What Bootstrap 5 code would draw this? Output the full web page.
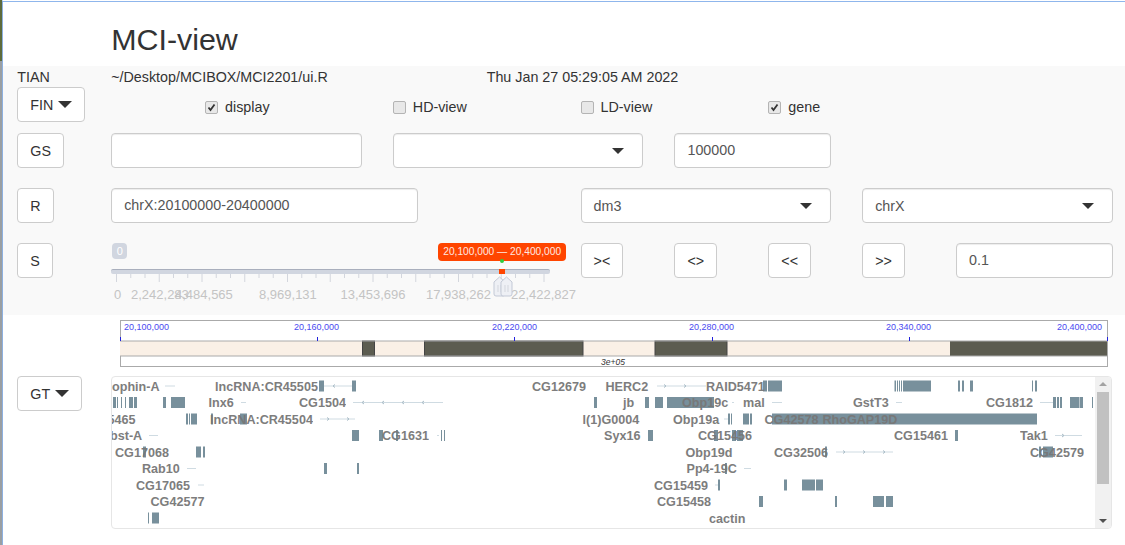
<!DOCTYPE html>
<html lang="en">
<head>
    <meta charset="UTF-8">
    <title>MCI-view</title>
    <meta name="viewport" content="width=device-width, initial-scale=1">
    <link href="https://cdn.jsdelivr.net/npm/bootstrap@5.3.2/dist/css/bootstrap.min.css" rel="stylesheet">
    <style>
        html, body { height: 545px; overflow: hidden; }
        body { background: linear-gradient(#5d6b3c 0, #5d6b3c 61px, #9a9fa3 61px); color: #333; font: 14.3px/20px "Liberation Sans", Arial, sans-serif; padding-left: 2px; }
        .app-frame { height: 545px; background: #fff; border-left: 1px solid #8db0e0; border-top: 1px solid #fff; position: relative; }
        .app-frame::before { content: ""; display: block; height: 1px; background: #8fb6ec; }
        .mci-row { --bs-gutter-x: 30px; width: 1126.5px; margin-left: -.7px; margin-right: 0; flex-wrap: wrap; }
        .title-row { height: 64px; }
        .app-title { font-size: 30.4px; line-height: 33px; font-weight: 400; margin: 21px 0 0; }
        .well-box { background: #f9f9f9; height: 249px; padding-top: 1px; width: 1125px; }
        .path-row { height: 20px; }
        .gap-s { margin-bottom: 11px; height: 35px; }
        .gap-l { margin-bottom: 20px; height: 35px; }
        .btn-mci { --bs-btn-font-size: 14.3px; --bs-btn-padding-x: 12px; --bs-btn-padding-y: 6px; --bs-btn-line-height: 20px; --bs-btn-color: #333; --bs-btn-bg: #fff; --bs-btn-border-color: #ccc; --bs-btn-border-radius: 4px; height: 35px; }
        .btn-mci::after { border-top-width: 7px; border-left-width: 7px; border-right-width: 7px; border-bottom: 0; margin-left: 5px; vertical-align: 2px; }
        .opt-check { height: 35px; gap: 7px; padding-top: 5px; }
        .opt-check input { appearance: none; width: 13px; height: 13px; margin: 0; background: #e8e8e8 center/11px no-repeat; border: 1px solid #b4b4b4; border-radius: 2px; }
        .opt-check input:checked { background-image: url("data:image/svg+xml,%3Csvg xmlns='http://www.w3.org/2000/svg' viewBox='0 0 11 11'%3E%3Cpath d='M2.500 5.500L4.500 8L8.500 2.500' fill='none' stroke='%23333' stroke-width='1.800'/%3E%3C/svg%3E"); }
        .field-mci { height: 35px; font-size: 14.3px; line-height: 20px; color: #555; border: 1px solid #ccc; border-radius: 4px; padding: 6px 12px; margin-right: 1px; box-shadow: inset 0 1px 1px rgba(0,0,0,.075); }
        .field-short { width: 307px; }
        .select-caret { width: 0; height: 0; border-left: 6px solid transparent; border-right: 6px solid transparent; border-top: 6px solid #333; margin-right: 6px; }
        .slider-box { position: relative; height: 35px; }
        .slide-min { position: absolute; left: 1px; top: 0; width: 15px; height: 16px; background: #d1d6e0; color: #fff; border-radius: 4px; font-size: 11px; line-height: 16px; text-align: center; }
        .slide-range { position: absolute; left: 327px; top: 0; width: 128px; height: 18px; background: #ff4500; color: #ffe9e0; border-radius: 4px; font-size: 10.2px; line-height: 18px; text-align: center; white-space: nowrap; }
        .slide-dot { position: absolute; left: 389px; top: 16px; width: 4px; height: 4px; background: #2ecc40; border-radius: 50%; }
        .slide-line { position: absolute; left: 0; top: 26px; width: 439px; height: 5px; background: #d1d6e0; border-top: 1px solid #a9afbd; border-radius: 2px; }
        .slide-bar { position: absolute; left: 388px; top: 26px; width: 6px; height: 5px; background: #ff4500; }
        .slide-svg { position: absolute; left: 0; top: 30px; overflow: visible; }
        .slide-tick { stroke: #d3d6dd; stroke-width: 1; }
        .slide-lab { font: 13px "Liberation Sans", Arial, sans-serif; fill: #c4c4c4; }
        .handle-shape { fill: #eef0f5; stroke: #c3c9d6; stroke-width: 1; }
        .ideo-row { height: 61px; }
        .ideo-svg { display: block; margin: 4px 0 0 8px; }
        .ideo-lab { font: 9px "Liberation Sans", Arial, sans-serif; fill: #4a4af0; }
        .ideo-note { font: italic 8.5px "Liberation Sans", Arial, sans-serif; fill: #333; }
        .track-box { position: relative; height: 153px; width: 1001px; border: 1px solid #e6e6e6; border-radius: 4px; overflow: hidden; background: #fff; }
        .track-svg { display: block; }
        .gene-name { font: bold 12.6px "Liberation Sans", Arial, sans-serif; fill: #777; opacity: .95; }
        .gene-exon { fill: #78909c; }
        .gene-line { stroke: #cfdbe2; stroke-width: 1; }
        .gene-arrow { fill: none; stroke: #a9bcc7; stroke-width: 1; }
        .scroll-rail { position: absolute; right: 0; top: 0; width: 16px; height: 100%; background: #f1f1f1; }
        .scroll-thumb { position: absolute; left: 2px; right: 2px; top: 15px; height: 92px; background: #c1c1c1; }
        .scroll-up, .scroll-down { position: absolute; left: 4px; width: 0; height: 0; border-left: 4px solid transparent; border-right: 4px solid transparent; }
        .scroll-up { top: 5px; border-bottom: 4px solid #a3a3a3; }
        .scroll-down { bottom: 5px; border-top: 4px solid #505050; }
    </style>
</head>
<body>
<div class="app-frame">
    <div class="row mci-row title-row">
        <div class="col-1"></div>
        <div class="col-11"><h2 class="app-title">MCI-view</h2></div>
    </div>
    <div class="well-box">
        <div class="row mci-row path-row">
            <div class="col-1">TIAN</div>
            <div class="col-4">~/Desktop/MCIBOX/MCI2201/ui.R</div>
            <div class="col-7">Thu Jan 27 05:29:05 AM 2022</div>
        </div>
        <div class="row mci-row gap-s">
            <div class="col-2"><button class="btn btn-mci dropdown-toggle" type="button">FIN</button></div>
            <div class="col-2"><label class="opt-check d-flex align-items-center"><input type="checkbox" checked>display</label></div>
            <div class="col-2"><label class="opt-check d-flex align-items-center"><input type="checkbox">HD-view</label></div>
            <div class="col-2"><label class="opt-check d-flex align-items-center"><input type="checkbox">LD-view</label></div>
            <div class="col-2"><label class="opt-check d-flex align-items-center"><input type="checkbox" checked>gene</label></div>
        </div>
        <div class="row mci-row gap-l">
            <div class="col-1"><button class="btn btn-mci" type="button">GS</button></div>
            <div class="col-3"><div class="field-mci bg-white"></div></div>
            <div class="col-3"><div class="field-mci bg-white d-flex align-items-center justify-content-end"><span class="select-caret"></span></div></div>
            <div class="col-2"><div class="field-mci bg-white">100000</div></div>
        </div>
        <div class="row mci-row gap-l">
            <div class="col-1"><button class="btn btn-mci" type="button">R</button></div>
            <div class="col-5"><div class="field-mci field-short bg-white">chrX:20100000-20400000</div></div>
            <div class="col-3"><div class="field-mci bg-white d-flex align-items-center justify-content-between">dm3<span class="select-caret"></span></div></div>
            <div class="col-3"><div class="field-mci bg-white d-flex align-items-center justify-content-between">chrX<span class="select-caret"></span></div></div>
        </div>
        <div class="row mci-row">
            <div class="col-1"><button class="btn btn-mci" type="button">S</button></div>
            <div class="col-5">
                <div class="slider-box">
                    <span class="slide-min">0</span>
                    <span class="slide-range">20,100,000 — 20,400,000</span>
                    <span class="slide-dot"></span>
                    <span class="slide-line"></span>
                    <span class="slide-bar"></span>
                    <svg class="slide-svg" id="slideSvg" width="470" height="30"></svg>
                </div>
            </div>
            <div class="col-1"><button class="btn btn-mci" type="button">&gt;&lt;</button></div>
            <div class="col-1"><button class="btn btn-mci" type="button">&lt;&gt;</button></div>
            <div class="col-1"><button class="btn btn-mci" type="button">&lt;&lt;</button></div>
            <div class="col-1"><button class="btn btn-mci" type="button">&gt;&gt;</button></div>
            <div class="col-2"><div class="field-mci bg-white">0.1</div></div>
        </div>
    </div>
    <div class="row mci-row ideo-row">
        <div class="col-1"></div>
        <div class="col-11">
            <svg class="ideo-svg" width="990" height="50" viewBox="119 320 990 50">
                <rect x="120.500" y="321.500" width="987" height="46" fill="#fff" stroke="#aaa"/>
                <rect x="120" y="342" width="987" height="15" fill="#faf0e6"/>
                <g fill="#5c5c50" stroke="#444">
                    <rect x="362.500" y="342" width="12" height="15"/>
                    <rect x="424.500" y="342" width="158.500" height="15"/>
                    <rect x="655" y="342" width="72" height="15"/>
                    <rect x="950" y="342" width="157" height="15" stroke="none"/>
                </g>
                <path d="M120 342H1107M120 357H1107" stroke="#aaa" fill="none"/>
                <path d="M120.500 338V342M317.500 338V342M514.500 338V342M712.500 338V342M909.500 338V342M1107.500 338V342" stroke="#2222dd"/>
                <text class="ideo-lab" x="124" y="331">20,100,000</text>
                <text class="ideo-lab" x="294" y="331">20,160,000</text>
                <text class="ideo-lab" x="492" y="331">20,220,000</text>
                <text class="ideo-lab" x="689" y="331">20,280,000</text>
                <text class="ideo-lab" x="886" y="331">20,340,000</text>
                <text class="ideo-lab" x="1057" y="331">20,400,000</text>
                <text class="ideo-note" x="601" y="366">3e+05</text>
            </svg>
        </div>
    </div>
    <div class="row mci-row">
        <div class="col-1"><button class="btn btn-mci dropdown-toggle" type="button">GT</button></div>
        <div class="col-11">
            <div class="track-box">
                <svg class="track-svg" id="trackSvg" width="1001" height="153" viewBox="112 377 1001 153"></svg>
                <div class="scroll-rail">
                    <span class="scroll-up"></span>
                    <span class="scroll-thumb"></span>
                    <span class="scroll-down"></span>
                </div>
            </div>
        </div>
    </div>
</div>
<script src="https://cdn.jsdelivr.net/npm/bootstrap@5.3.2/dist/js/bootstrap.bundle.min.js"></script>
<script>
    // slider ticks and labels (y = 0 is the bottom of the line)
    let s = '';
    for (let i = 0; i <= 30; i++) {
        let x = 5.5 + i * 14.25;
        s += `<line class="slide-tick" x1="${x}" y1="1" x2="${x}" y2="${i % 3 ? 5 : 9}"/>`;
    }
    [[3, '0'], [20, '2,242,283'], [64, '4,484,565'], [148, '8,969,131'], [229.500, '13,453,696'], [315, '17,938,262'], [400, '22,422,827']].forEach(l => {
        s += `<text class="slide-lab" x="${l[0]}" y="26">${l[1]}</text>`;
    });
    [383, 390].forEach(x => {
        s += `<path class="handle-shape" d="M${x} 9L${x + 5.5} 4L${x + 11} 9V21Q${x + 11} 23 ${x + 9} 23H${x + 2}Q${x} 23 ${x} 21Z"/>`;
        s += `<path class="slide-tick" d="M${x + 4} 12V19M${x + 7} 12V19"/>`;
    });
    document.getElementById('slideSvg').innerHTML = s;

    // gene rows: names [x, text], exons [x1, x2], lines [x1, x2, arrow dir]
    const rowY = [386, 402.500, 419, 435.500, 452, 468.500, 485, 501.500, 518];
    const rows = [
        { names: [[112, 'ophin-A'], [215, 'lncRNA:CR45505'], [532, 'CG12679'], [605.500, 'HERC2'], [706, 'RAID5471']],
          exons: [[319, 324], [352, 356], [763, 767], [768, 782], [894.500, 896], [897, 898], [899, 900], [901, 902], [903, 931], [958, 960], [962, 964], [970, 973], [1032, 1033], [1035, 1037]],
          lines: [[165, 175, 0], [324, 352, -1], [657, 706, 1]] },
        { names: [[208.500, 'Inx6'], [299, 'CG1504'], [623, 'jb'], [682, 'Obp19c'], [743, 'mal'], [853, 'GstT3'], [986, 'CG1812']],
          exons: [[113, 116], [117, 118], [121, 122], [125, 126], [129, 133], [134, 137], [163, 166], [171, 185], [594, 597], [645, 649], [655, 663], [667, 682], [682, 714], [1053, 1056], [1057, 1059], [1060, 1062], [1070, 1079], [1079.500, 1083], [1092, 1093]],
          lines: [[241, 246, 0], [353, 443, -1], [732, 734, 0], [772, 782, 0], [896, 902, 0], [1040, 1053, 0]] },
        { names: [[107.500, '5465'], [210, 'lncRNA:CR45504'], [582.500, 'l(1)G0004'], [673, 'Obp19a'], [764.500, 'CG42578'], [822.500, 'RhoGAP19D']],
          exons: [[186, 188], [189, 190], [191, 197], [211, 213], [240, 247], [728, 730], [731, 732], [743, 749], [750, 752], [772, 1037]],
          lines: [[320, 355, 1], [724, 728, 0]] },
        { names: [[110, 'bst-A'], [382, 'CG1631'], [604, 'Syx16'], [698, 'CG15456'], [894, 'CG15461'], [1020, 'Tak1']],
          exons: [[352, 359], [379, 383], [396, 398], [441, 442], [444, 445], [648, 653], [714, 718], [732, 736], [737, 743], [955, 958]],
          lines: [[149, 158, 0], [437, 439, 0], [1055, 1082, 1]] },
        { names: [[115, 'CG17068'], [685.500, 'Obp19d'], [774, 'CG32506'], [1030, 'CG42579']],
          exons: [[143, 146], [196, 201], [203, 205], [825, 827], [1039, 1041], [1043, 1053]],
          lines: [[836, 893, 1]] },
        { names: [[142, 'Rab10'], [686.500, 'Pp4-19C']],
          exons: [[324, 327], [357, 359], [725, 727]],
          lines: [[187, 196, 0], [744, 751, 0]] },
        { names: [[136, 'CG17065'], [654, 'CG15459']],
          exons: [[718, 720], [784, 787], [802, 815], [816, 823]],
          lines: [[198, 204, 0], [715, 718, 0]] },
        { names: [[150.500, 'CG42577'], [657, 'CG15458']],
          exons: [[759, 763], [835, 837], [873, 884], [886, 893]],
          lines: [] },
        { names: [[709, 'cactin']],
          exons: [[148, 149], [152, 159]],
          lines: [] }
    ];
    let t = '';
    rows.forEach((r, i) => {
        let y = rowY[i];
        r.lines.forEach(l => {
            t += `<line class="gene-line" x1="${l[0]}" y1="${y}" x2="${l[1]}" y2="${y}"/>`;
            if (l[2]) {
                for (let x = l[0] + 9; x < l[1] - 3; x += 20) {
                    t += `<path class="gene-arrow" d="M${x - l[2] * 2} ${y - 1.5}L${x} ${y}L${x - l[2] * 2} ${y + 1.5}"/>`;
                }
            }
        });
        r.exons.forEach(e => {
            t += `<rect class="gene-exon" x="${e[0]}" y="${y - 5.5}" width="${e[1] - e[0]}" height="11"/>`;
        });
        r.names.forEach(n => {
            t += `<text class="gene-name" x="${n[0]}" y="${y + 4.5}">${n[1]}</text>`;
        });
    });
    document.getElementById('trackSvg').innerHTML = t;
</script>
</body>
</html>
